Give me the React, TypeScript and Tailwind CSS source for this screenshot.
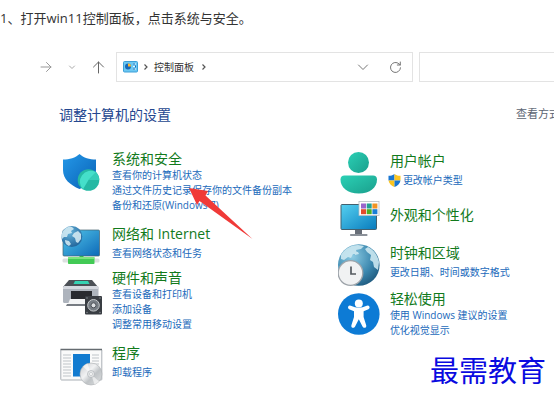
import type { ReactNode } from 'react'
import { clsx } from 'clsx'

type Category = {
  title: string
  links: string[]
  icon: ReactNode
  cls?: string
  textCls?: string
  admin?: boolean
}

const LEFT: Category[] = [
  { title: '系统和安全', links: ['查看你的计算机状态', '通过文件历史记录保存你的文件备份副本', '备份和还原(Windows 7)'], icon: <ShieldIcon /> },
  { title: '网络和 Internet', links: ['查看网络状态和任务'], icon: <NetworkIcon />, cls: 'mt-3' },
  { title: '硬件和声音', links: ['查看设备和打印机', '添加设备', '调整常用移动设置'], icon: <PrinterIcon />, cls: 'mt-1' },
  { title: '程序', links: ['卸载程序'], icon: <ProgramsIcon />, cls: 'mt-3' },
]

const RIGHT: Category[] = [
  { title: '用户帐户', links: ['更改帐户类型'], icon: <UserIcon />, textCls: 'pt-0.5', admin: true },
  { title: '外观和个性化', links: [], icon: <DisplayIcon />, cls: 'mt-1.5', textCls: 'pt-1.5' },
  { title: '时钟和区域', links: ['更改日期、时间或数字格式'], icon: <ClockIcon />, cls: 'mt-1' },
  { title: '轻松使用', links: ['使用 Windows 建议的设置', '优化视觉显示'], icon: <AccessIcon />, cls: 'mt-0.5' },
]

export default function App() {
  return (
    <div className="relative min-h-[401px] overflow-hidden bg-white font-['Open_Sans','Noto_Sans_CJK_SC',sans-serif]">
      <p className="h-9 text-[13px] leading-9 text-[#333]">1、打开win11控制面板，点击系统与安全。</p>
      <Toolbar />
      <main className="pl-[60px]">
        <div className="mt-5 flex h-6 items-center justify-between">
          <h1 className="-ml-px text-[14px] text-[#24478f]">调整计算机的设置</h1>
          <span className="-mr-1.5 text-[11px] text-[#5b6472]">查看方式</span>
        </div>
        <div className="mt-6 grid grid-cols-[9fr_7fr]">
          <Column items={LEFT} />
          <Column items={RIGHT} />
        </div>
      </main>
      <Pointer />
      <div className="absolute right-2 bottom-3 text-[29px] leading-10 text-[#0a0ae0] font-['KaiTi','Noto_Sans_CJK_SC',serif]">最需教育</div>
    </div>
  )
}

// ── Barra de navegación ──
function Toolbar() {
  const stroke = { fill: 'none', strokeLinecap: 'round', strokeLinejoin: 'round' } as const
  return (
    <nav className="mt-4 flex h-[30px] items-center text-[#666]">
      <div className="flex w-[116px] shrink-0 items-center pl-10">
        <button aria-label="前进">
          <svg width="12" height="12" viewBox="0 0 12 12" stroke="#999" {...stroke}><path d="M1 6h10M6.5 1.5 11 6l-4.500 4.500" /></svg>
        </button>
        <button aria-label="最近" className="ml-4">
          <svg width="8" height="12" viewBox="0 0 8 12" stroke="#aaa" {...stroke}><path d="m1.500 5 2.500 2.500L6.500 5" /></svg>
        </button>
        <button aria-label="向上" className="ml-4">
          <svg width="13" height="14" viewBox="0 0 13 14" stroke="#666" {...stroke}><path d="M6.500 13V2M1.500 7l5-5 5 5" /></svg>
        </button>
      </div>
      <div className="grid h-full min-w-0 flex-1 grid-cols-[11fr_5fr] gap-1.5">
        <div className="flex items-center border border-[#e3e3e3] pl-1.5">
          <PanelIcon />
          <Chevron />
          <button className="mr-0.5 text-[10px] text-[#333]">控制面板</button>
          <Chevron />
          <button aria-label="历史记录" className="ml-auto">
            <svg width="12" height="12" viewBox="0 0 12 12" stroke="#777" {...stroke}><path d="m1.500 4 4.500 4.500L10.500 4" /></svg>
          </button>
          <button aria-label="刷新" className="mr-2.5 ml-5">
            <svg width="13" height="13" viewBox="0 0 13 13" stroke="#777" {...stroke}><path d="M11.500 6.800a5 5 0 1 1-1.500-3.900l1.200 1M11.300 1v3h-3" /></svg>
          </button>
        </div>
        <input aria-label="搜索" className="min-w-0 border border-r-0 border-[#e3e3e3] px-2 text-[11px] outline-none" />
      </div>
    </nav>
  )
}

function Chevron() {
  return (
    <svg className="mx-1" width="8" height="8" viewBox="0 0 8 8" fill="none" stroke="#555" strokeWidth="1.2"><path d="m2.500 1.500 2.500 2.500-2.500 2.500" /></svg>
  )
}

// ── Categorías ──
function Column({ items }: { items: Category[] }) {
  return (
    <div>
      {items.map(c => (
        <section key={c.title} className={clsx('flex gap-2', c.cls)}>
          <div className="w-11 shrink-0">{c.icon}</div>
          <div className={clsx('whitespace-nowrap', c.textCls)}>
            <h2 className="text-[14px] leading-[18px] text-[#127a1c]">{c.title}</h2>
            <ul className={clsx('text-[10px] leading-[15px] text-[#1b6abb]', c.links.length === 1 && 'mt-[3px]')}>
              {c.links.map(l => (
                <li key={l} className="flex items-center">
                  {c.admin && <UacIcon />}
                  <a href="#" className="hover:underline">{l}</a>
                </li>
              ))}
            </ul>
          </div>
        </section>
      ))}
    </div>
  )
}

function Pointer() {
  return (
    <svg className="pointer-events-none absolute top-[187px] left-[188px]" width="66" height="54" viewBox="0 0 66 54">
      <path d="M1 1 20 4 17.500 8.500 64.500 52 11.500 14 9 18Z" fill="#f03a38" />
    </svg>
  )
}

// ── Iconos ──
function PanelIcon() {
  return (
    <svg width="15" height="12" viewBox="0 0 15 12">
      <rect x=".5" y=".5" width="14" height="10.500" rx="1" fill="#6cc8f2" stroke="#3c9fd8" />
      <circle cx="5" cy="5.500" r="3" fill="#1668b8" />
      <path d="M5 5.500V2.500a3 3 0 0 1 3 3Z" fill="#ffb52e" />
      <path d="M10 3h3M10 5.500h3M10 8h3" stroke="#e8f8ff" />
      <path d="M11 2v2M12.500 4.500v2M11 7v2" stroke="#1668b8" />
    </svg>
  )
}

function UacIcon() {
  return (
    <svg className="mr-0.5 -ml-0.5" width="13" height="13" viewBox="0 0 13 13">
      <path d="M6.500 0C5 1.300 2.500 1.800.5 1.800V6.500h6Z" fill="#1976d2" />
      <path d="M6.500 0C8 1.300 10.500 1.800 12.500 1.800V6.500h-6Z" fill="#fcc520" />
      <path d="M.5 6.500c.3 3 3 5.300 6 6.500V6.500Z" fill="#fcc520" />
      <path d="M12.500 6.500c-.3 3-3 5.300-6 6.500V6.500Z" fill="#1976d2" />
    </svg>
  )
}

function ShieldIcon() {
  return (
    <svg width="44" height="44" viewBox="0 0 44 44">
      <defs>
        <linearGradient id="shield" x1="0" y1="0" x2="1" y2="1"><stop stopColor="#2498e8" /><stop offset="1" stopColor="#0961b5" /></linearGradient>
      </defs>
      <path d="M19.500 4c4 3.800 10 5.500 16.500 5.500V20c0 9-7 15-16.500 19C10 35 3 29 3 20V9.500C9.500 9.500 15.500 7.800 19.500 4Z" fill="url(#shield)" />
      <circle cx="28.500" cy="30" r="10.800" fill="#25b9a4" />
      <path d="M28.500 30 23 39.300A10.800 10.800 0 0 1 36 22.300Z" fill="#45dfca" />
      <path d="M28.500 30 36 22.300a10.800 10.800 0 0 1 3.300 7.700Z" fill="#35cdb8" />
    </svg>
  )
}

function NetworkIcon() {
  return (
    <svg width="44" height="40" viewBox="0 0 44 40">
      <defs>
        <linearGradient id="net" x1="0" y1="0" x2="1" y2="1"><stop stopColor="#54c8ea" /><stop offset="1" stopColor="#0d69b8" /></linearGradient>
        <radialGradient id="globe" cx=".4" cy=".3" r=".8"><stop stopColor="#65b4dc" /><stop offset="1" stopColor="#1c5d94" /></radialGradient>
      </defs>
      <rect x="3" y="5" width="36.500" height="26" rx="1" fill="url(#net)" stroke="#45636e" strokeWidth=".7" />
      <rect x="2.500" y="33.500" width="37" height="4" rx="1.500" fill="#dce0e0" />
      <path d="M19.500 31h4v2h-4Z" fill="#3bae53" />
      <rect x="8" y="32" width="26.500" height="7" rx=".8" fill="#42ca55" />
      <path d="M8 33h26.500" stroke="#8fee8c" strokeWidth="1.500" />
      <circle cx="11.800" cy="11.500" r="10.500" fill="url(#globe)" />
      <path d="M3 6c3-4 6-5 9-4l2 2-3 2 1 2-4 1-1 3-3 0-2 2-1-3ZM14 8l4-2 3 3 0 5-3 4-2-1-1-4-3-2ZM5 15l4 1 2 3-2 2c-3-1-4-3-4-6Z" fill="#d8edf5" opacity=".85" />
    </svg>
  )
}

function PrinterIcon() {
  return (
    <svg width="44" height="48" viewBox="0 0 44 48">
      <path d="M9 11h23l6 7H3Z" fill="#4c5056" />
      <path d="M15 12h13l1.500 3h-16Z" fill="#35d2b2" />
      <rect x="3" y="17" width="35.500" height="17" rx="1.500" fill="#aeb4bd" />
      <path d="M3 18.500a1.500 1.500 0 0 1 1.500-1.500H37a1.500 1.500 0 0 1 1.500 1.500V20H3Z" fill="#d5d8df" />
      <rect x="11" y="22" width="21" height="9" fill="#292b30" />
      <path d="M10 30h17v5H8Z" fill="#f4f5f6" />
      <path d="M7 35h19v2H6Z" fill="#777c83" />
      <rect x="25" y="27" width="17" height="18.500" rx="1" fill="#393d43" />
      <circle cx="33.500" cy="36.300" r="5.800" fill="#777d84" stroke="#c6c9cc" />
      <circle cx="33.500" cy="36.300" r="2.500" fill="#dde0e3" stroke="#4b4f55" />
      <g fill="#8d9298"><circle cx="27" cy="29" r=".7" /><circle cx="40" cy="29" r=".7" /><circle cx="27" cy="43.500" r=".7" /><circle cx="40" cy="43.500" r=".7" /></g>
    </svg>
  )
}

function ProgramsIcon() {
  return (
    <svg width="44" height="42" viewBox="0 0 44 42">
      <defs>
        <linearGradient id="disc" x1="0" y1="0" x2="1" y2="1"><stop stopColor="#c5c8cb" /><stop offset=".4" stopColor="#f1f2f3" /><stop offset=".6" stopColor="#bfc3c6" /><stop offset="1" stopColor="#e0e2e3" /></linearGradient>
      </defs>
      <rect x=".8" y="5.500" width="41" height="30.500" rx=".7" fill="#fafafa" stroke="#aab0b5" />
      <path d="M.5 5.500h41.500" stroke="#656b70" strokeWidth="1.500" />
      <path d="M3 11h8M3 14h8M3 17h8M3 20h8M3 23h8M3 26h8M3 29h8M3 32h8M32 11h7M32 14h7M32 17h7M32 20h7" stroke="#bfc4c8" />
      <rect x="13" y="10" width="17" height="22.500" fill="#127bd0" />
      <circle cx="31" cy="30" r="11" fill="url(#disc)" stroke="#acb0b3" strokeWidth=".6" />
      <path d="m31 30-8-7.500a11 11 0 0 1 4.500-3ZM31 30l8 7.500a11 11 0 0 1-4.500 3Z" fill="#fff" opacity=".6" />
      <circle cx="31" cy="30" r="3.500" fill="#e5e7e8" stroke="#a5aaae" strokeWidth=".6" />
      <circle cx="31" cy="30" r="1.500" fill="#fff" stroke="#a5aaae" strokeWidth=".5" />
    </svg>
  )
}

function UserIcon() {
  return (
    <svg width="44" height="44" viewBox="0 0 44 44">
      <defs>
        <linearGradient id="user" x1="0" y1="0" x2="1" y2="1"><stop stopColor="#2bd0b5" /><stop offset="1" stopColor="#1a9f8c" /></linearGradient>
      </defs>
      <circle cx="20.500" cy="12.500" r="10.500" fill="url(#user)" />
      <path d="M6.500 25.500h28.500c2.500 0 4 1.600 4 4 0 8-7 14-18.200 14S2.500 37.500 2.500 29.500c0-2.400 1.500-4 4-4Z" fill="url(#user)" />
    </svg>
  )
}

function DisplayIcon() {
  return (
    <svg width="44" height="40" viewBox="0 0 44 40">
      <defs>
        <linearGradient id="display" x1="0" y1="0" x2="1" y2="1"><stop stopColor="#55d0f0" /><stop offset="1" stopColor="#087bbd" /></linearGradient>
      </defs>
      <path d="M17 29h7v6h-7Z" fill="#686e78" />
      <rect x="12" y="34" width="17.500" height="2" rx=".8" fill="#8b9199" />
      <rect x="3" y="4.500" width="35.500" height="25" rx="1" fill="url(#display)" stroke="#42606f" />
      <rect x="21" y="1.500" width="20" height="14" fill="#fff" stroke="#b8bdc2" strokeWidth=".8" />
      <g>
        <rect x="23" y="3.500" width="5" height="5" fill="#9b65cb" /><rect x="28.700" y="3.500" width="5" height="5" fill="#23a095" /><rect x="34.400" y="3.500" width="5" height="5" fill="#f29322" />
        <rect x="23" y="9.200" width="5" height="5" fill="#e44b2b" /><rect x="28.700" y="9.200" width="5" height="5" fill="#4eae22" /><rect x="34.400" y="9.200" width="5" height="5" fill="#197dd5" />
      </g>
    </svg>
  )
}

function ClockIcon() {
  return (
    <svg width="44" height="44" viewBox="0 0 44 44">
      <defs>
        <radialGradient id="world" cx=".35" cy=".3" r=".8"><stop stopColor="#8ccbe3" /><stop offset=".6" stopColor="#3c88af" /><stop offset="1" stopColor="#1c5579" /></radialGradient>
      </defs>
      <circle cx="20.800" cy="21" r="20.800" fill="url(#world)" />
      <path d="M3 11C7 4 14 1 20 1l6 1-3 3-5 1 1 3-4 1-2 4-3-1-4 3-3-1ZM30 3c6 3 10 9 11 15l-1 8-4-3-1-5-3-2 1-5-4-3-2-3ZM17 8l3 0 1 2-4 1Z" fill="#cce8f1" opacity=".9" />
      <circle cx="12.500" cy="29" r="12.300" fill="#f1f2f3" stroke="#9ea4aa" strokeWidth="1.300" />
      <path d="M13 22.500V30h5" fill="none" stroke="#555b60" strokeWidth="1.700" />
    </svg>
  )
}

function AccessIcon() {
  return (
    <svg width="44" height="46" viewBox="0 0 44 46">
      <circle cx="20.800" cy="24" r="20.800" fill="#0d7bd5" />
      <circle cx="20.800" cy="13.500" r="4" fill="#fff" />
      <path d="M12 17.500c3 1.500 5.500 2.300 8.800 2.300s5.800-.8 8.800-2.300" fill="none" stroke="#fff" strokeWidth="4" strokeLinecap="round" />
      <path d="M16 19h9.600v8l2.600 8.200c.8 2.600-2.600 3.800-3.700 1.300l-3.700-7.300-3.700 7.300c-1.100 2.500-4.500 1.300-3.700-1.300L16 27Z" fill="#fff" />
    </svg>
  )
}
